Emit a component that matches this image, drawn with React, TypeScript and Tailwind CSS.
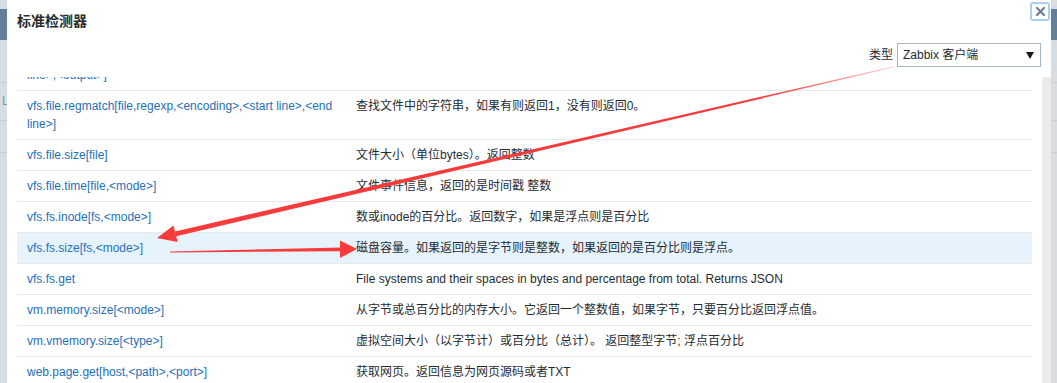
import React from "react";

interface Row {
    key: string;
    desc: string;
    active?: boolean;
}

const rows: Row[] = [
    { key: "vfs.file.regexp[file,regexp,<encoding>,<start line>,<end line>,<output>]", desc: "在文件中查找字符串，返回匹配的行。" },
    { key: "vfs.file.regmatch[file,regexp,<encoding>,<start line>,<end line>]", desc: "查找文件中的字符串，如果有则返回1，没有则返回0。" },
    { key: "vfs.file.size[file]", desc: "文件大小（单位bytes）。返回整数" },
    { key: "vfs.file.time[file,<mode>]", desc: "文件事件信息，返回的是时间戳 整数" },
    { key: "vfs.fs.inode[fs,<mode>]", desc: "数或inode的百分比。返回数字，如果是浮点则是百分比" },
    { key: "vfs.fs.size[fs,<mode>]", desc: "磁盘容量。如果返回的是字节则是整数，如果返回的是百分比则是浮点。", active: true },
    { key: "vfs.fs.get", desc: "File systems and their spaces in bytes and percentage from total. Returns JSON" },
    { key: "vm.memory.size[<mode>]", desc: "从字节或总百分比的内存大小。它返回一个整数值，如果字节，只要百分比返回浮点值。" },
    { key: "vm.vmemory.size[<type>]", desc: "虚拟空间大小（以字节计）或百分比（总计）。 返回整型字节; 浮点百分比" },
    { key: "web.page.get[host,<path>,<port>]", desc: "获取网页。返回信息为网页源码或者TXT" },
];

// the page behind the dialog, only a sliver of it shows on each side
function PageEdge({ side }: { side: "left" | "right" }) {
    return (
        <div className={`relative h-full overflow-hidden bg-[#d8dde1] ${side === "left" ? "w-[7px]" : "w-[6px]"}`}>
            <div className="mt-[9px] h-[31px] bg-[#62809a]" />
            <div className="mt-[42px] border-t border-[#c6cdd3]" />
            <div className={`h-[37px] pt-[11px] text-[12px] leading-[14px] text-[#6f9ac2] ${side === "left" ? "pl-[2px]" : "pl-0"}`}>
                {side === "left" ? "L" : ""}
            </div>
            <div className="border-t border-[#c6cdd3]" />
            <div className="mt-[31px] border-t border-[#c6cdd3]" />
        </div>
    );
}

function Arrows() {
    return (
        <svg className="pointer-events-none absolute inset-0" width="1057" height="383" viewBox="0 0 1057 383">
            <defs>
                <linearGradient id="fade" gradientUnits="userSpaceOnUse" x1="893" y1="67" x2="760" y2="98">
                    <stop offset="0" stopColor="#f53b3b" stopOpacity="0.25" />
                    <stop offset="1" stopColor="#f53b3b" stopOpacity="1" />
                </linearGradient>
            </defs>
            {/* long arrow from the type select down to vfs.fs.size */}
            <polygon points="893.1,67.5 892.9,66.5 174.9,231.5 176.1,236.3" fill="url(#fade)" />
            <polygon points="157,238 177.6,242 173.5,225.6" fill="#f53b3b" />
            {/* short arrow pointing at the description */}
            <polygon points="170,251.5 170,252.5 341,251.2 341,247.4" fill="#f53b3b" />
            <polygon points="357,249 340,240.5 340,258" fill="#f53b3b" />
        </svg>
    );
}

export default function App() {
    return (
        <div className="relative flex h-[383px] w-[1057px] overflow-hidden bg-white font-['Liberation_Sans','Noto_Sans_CJK_SC',sans-serif] text-[12px] text-[#1f2c33]">
            <PageEdge side="left" />

            <main className="flex h-full flex-1 flex-col bg-white shadow-[-1px_0_2px_rgba(0,0,0,0.15)]">
                {/* Header */}
                <header className="flex h-[43px] items-start justify-between">
                    <h1 className="pl-[10px] pt-[12px] text-[14px] font-semibold leading-[18px] text-[#2b2b2b]">标准检测器</h1>
                    <button className="mr-px mt-[2px] flex h-[19px] w-[20px] items-center justify-center rounded-[3px] border-2 border-[#a9cff2] bg-white">
                        <svg width="9" height="9" viewBox="0 0 9 9">
                            <path d="M1 1 L8 8 M8 1 L1 8" stroke="#6d7f8d" strokeWidth="2.2" strokeLinecap="square" />
                        </svg>
                    </button>
                </header>

                {/* Filter */}
                <div className="flex h-[24px] items-center justify-end gap-[4px] pr-[10px]">
                    <span className="text-[12px] text-[#1f2c33]">类型</span>
                    <div className="flex h-[24px] w-[144px] items-center justify-between border border-[#a8b6c1] bg-white pl-[5px] pr-[6px]">
                        <span>Zabbix 客户端</span>
                        <svg width="8" height="7" viewBox="0 0 8 7">
                            <polygon points="0,0 8,0 4,7" fill="#1a1a1a" />
                        </svg>
                    </div>
                </div>

                {/* List */}
                <div className="mt-[10px] flex min-h-0 flex-1">
                    <div className="ml-[10px] w-[1015px] overflow-hidden">
                        <div className="-mt-[35px]">
                            {rows.map((r) => (
                                <div
                                    key={r.key}
                                    className={`flex border-b border-[#e6e9eb] leading-[18px] ${r.active ? "bg-[#e6f3fd]" : "bg-white"}`}
                                >
                                    <div className="w-[329px] shrink-0 px-[10px] py-[6px] text-[#2570b7]">{r.key}</div>
                                    <div className="flex-1 px-[10px] py-[6px]">{r.desc}</div>
                                </div>
                            ))}
                        </div>
                    </div>
                    <div className="ml-[10px] w-[9px] bg-[#ebebeb]" />
                </div>
            </main>

            <PageEdge side="right" />
            <Arrows />
        </div>
    );
}
